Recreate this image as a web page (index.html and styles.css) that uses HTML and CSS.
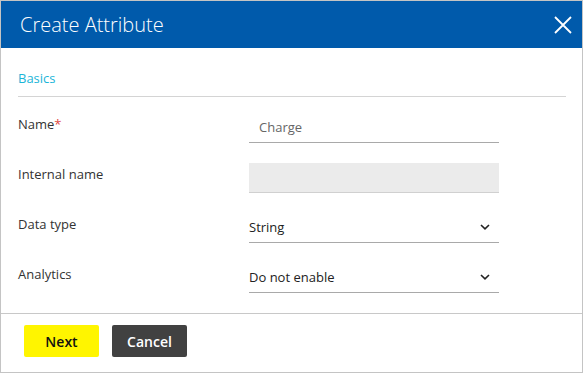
FILE: index.html
```
<!DOCTYPE html>
<html>
<head>
<meta charset="utf-8">
<link rel="stylesheet" href="styles.css">
</head>
<body>
<div class="dialog">
  <div class="header">
    <h1 class="title">Create Attribute</h1>
    <button class="close" aria-label="Close">
      <svg width="20" height="20" viewBox="0 0 20 20"><path d="M2 2L18 18M18 2L2 18" stroke="#fff" stroke-width="1.8" fill="none"/></svg>
    </button>
  </div>
  <div class="content">
    <div class="section-title">Basics</div>
    <div class="form">
      <div class="label">Name<span class="req">*</span></div>
      <div class="field text"><span class="val muted">Charge</span></div>
      <div class="label">Internal name</div>
      <div class="field disabled"></div>
      <div class="label">Data type</div>
      <div class="field select"><span class="val">String</span>
        <svg class="chev" width="10" height="6" viewBox="0 0 10 6"><path d="M1 1L5 4.8L9 1" stroke="#222" stroke-width="1.6" fill="none"/></svg>
      </div>
      <div class="label">Analytics</div>
      <div class="field select"><span class="val">Do not enable</span>
        <svg class="chev" width="10" height="6" viewBox="0 0 10 6"><path d="M1 1L5 4.8L9 1" stroke="#222" stroke-width="1.6" fill="none"/></svg>
      </div>
    </div>
  </div>
  <div class="footer">
    <button class="btn btn-primary">Next</button>
    <button class="btn btn-secondary">Cancel</button>
  </div>
</div>
</body>
</html>
```
FILE: styles.css
```
* { box-sizing: border-box; }
html, body { margin: 0; padding: 0; background: #fff; }
body { font-family: "Open Sans", "Liberation Sans", sans-serif; color: #333; }
.dialog {
  width: 583px;
  height: 373px;
  border: 1px solid #c4c4c4;
  display: flex;
  flex-direction: column;
}
.header {
  height: 47px;
  background: #005aab;
  display: flex;
  align-items: center;
  justify-content: space-between;
  padding: 0 8px 0 19px;
}
.title {
  margin: 0;
  font-size: 20px;
  font-weight: 300;
  color: #fff;
  line-height: 1;
  padding-top: 1px;
}
.close {
  border: 0;
  background: transparent;
  padding: 0;
  width: 22px;
  height: 22px;
  display: flex;
  align-items: center;
  justify-content: center;
}
.content {
  flex: 1;
  padding: 21px 16px 0 17px;
}
.section-title {
  font-size: 13px;
  line-height: 18px;
  color: #1bb5d8;
  padding-bottom: 9px;
  border-bottom: 1px solid #d4d4d4;
}
.form {
  display: grid;
  grid-template-columns: 231px 250px;
  row-gap: 20px;
  padding-top: 16px;
}
.label {
  font-size: 13px;
  padding-top: 2px;
  color: #333;
}
.req { color: #e04a3f; }
.field {
  height: 30px;
  border-bottom: 1px solid #a9a9a9;
  display: flex;
  align-items: center;
  padding-bottom: 2px;
  font-size: 13px;
  color: #222;
}
.text { padding-left: 10px; }
.muted { color: #666; }
.disabled { background: #ebebeb; border-bottom-color: #d0d0d0; }
.select { justify-content: space-between; padding-right: 9px; }
.chev { margin-top: 1px; }
.footer {
  height: 59px;
  border-top: 1px solid #c8c8c8;
  padding: 11px 0 0 23px;
  display: flex;
  align-items: flex-start;
  gap: 13px;
}
.btn {
  width: 75px;
  height: 32px;
  border: 0;
  border-radius: 2px;
  font-family: "Open Sans", "Liberation Sans", sans-serif;
  font-size: 14px;
  font-weight: 600;
  padding: 0;
}
.btn-primary { background: #fff500; color: #111; }
.btn-secondary { background: #414141; color: #fff; }
```
